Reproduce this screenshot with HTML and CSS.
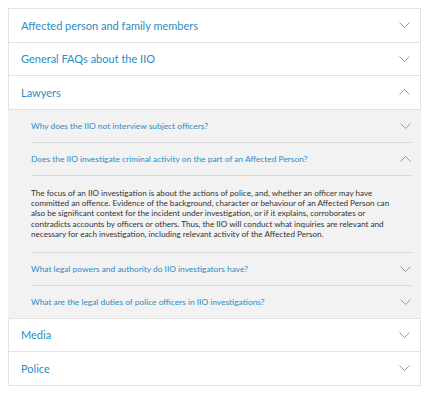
FILE: index.html
```html
<!DOCTYPE html>
<html lang="en">
  <head>
    <meta charset="utf-8" />
    <title>FAQ</title>
    <link rel="stylesheet" href="styles.css">
  </head>
  <body>
    <div class="accordion">
      <div class="section">
        <div class="section-head">
          <span>Affected person and family members</span>
          <svg class="chev" width="11" height="6" viewBox="0 0 11 6"><polyline points="0.5,0.5 5.5,5.5 10.5,0.5" /></svg>
        </div>
      </div>
      <div class="section">
        <div class="section-head">
          <span>General FAQs about the IIO</span>
          <svg class="chev" width="11" height="6" viewBox="0 0 11 6"><polyline points="0.5,0.5 5.5,5.5 10.5,0.5" /></svg>
        </div>
      </div>
      <div class="section open">
        <div class="section-head">
          <span>Lawyers</span>
          <svg class="chev" width="11" height="6" viewBox="0 0 11 6"><polyline points="0.5,5.5 5.5,0.5 10.5,5.5" /></svg>
        </div>
        <div class="section-body">
          <div class="question">
            <div class="question-head">
              <span>Why does the IIO not interview subject officers?</span>
              <svg class="chev" width="11" height="6" viewBox="0 0 11 6"><polyline points="0.5,0.5 5.5,5.5 10.5,0.5" /></svg>
            </div>
          </div>
          <div class="question">
            <div class="question-head">
              <span>Does the IIO investigate criminal activity on the part of an Affected Person?</span>
              <svg class="chev" width="11" height="6" viewBox="0 0 11 6"><polyline points="0.5,5.5 5.5,0.5 10.5,5.5" /></svg>
            </div>
            <p class="answer">The focus of an IIO investigation is about the actions of police, and, whether an officer may have committed an offence. Evidence of the background, character or behaviour of an Affected Person can also be significant context for the incident under investigation, or if it explains, corroborates or contradicts accounts by officers or others. Thus, the IIO will conduct what inquiries are relevant and necessary for each investigation, including relevant activity of the Affected Person.</p>
          </div>
          <div class="question">
            <div class="question-head">
              <span>What legal powers and authority do IIO investigators have?</span>
              <svg class="chev" width="11" height="6" viewBox="0 0 11 6"><polyline points="0.5,0.5 5.5,5.5 10.5,0.5" /></svg>
            </div>
          </div>
          <div class="question">
            <div class="question-head">
              <span>What are the legal duties of police officers in IIO investigations?</span>
              <svg class="chev" width="11" height="6" viewBox="0 0 11 6"><polyline points="0.5,0.5 5.5,5.5 10.5,0.5" /></svg>
            </div>
          </div>
        </div>
      </div>
      <div class="section">
        <div class="section-head">
          <span>Media</span>
          <svg class="chev" width="11" height="6" viewBox="0 0 11 6"><polyline points="0.5,0.5 5.5,5.5 10.5,0.5" /></svg>
        </div>
      </div>
      <div class="section">
        <div class="section-head">
          <span>Police</span>
          <svg class="chev" width="11" height="6" viewBox="0 0 11 6"><polyline points="0.5,0.5 5.5,5.5 10.5,0.5" /></svg>
        </div>
      </div>
    </div>
  </body>
</html>
```

FILE: styles.css
```css
html {
  font-family: Lato, "Noto Sans", sans-serif;
  font-size: 12px;
}

body {
  margin: 8px;
  background-color: white;
}

.accordion {
  width: 413px;
}

.section {
  border: 1px solid #e2e2e2;
  border-top: none;
  background-color: white;
}

.section:first-child {
  border-top: 1px solid #e2e2e2;
}

.section-head {
  display: flex;
  align-items: center;
  justify-content: space-between;
  height: 32.5px;
  padding: 0 10px 0 12px;
  color: #2b8cc4;
  font-size: 11px;
}

.chev polyline {
  fill: none;
  stroke: #9a9a9a;
  stroke-width: 1;
}

.section.open .section-head {
  border-bottom: 1px solid #e2e2e2;
}

.section-body {
  background-color: #f2f2f2;
  margin: 0 -1px;
  padding: 0 9px 0 23px;
}

.question {
  border-bottom: 1px solid #dadada;
}

.question:last-child {
  border-bottom: none;
}

.question-head {
  display: flex;
  align-items: center;
  justify-content: space-between;
  height: 32px;
  color: #2b8cc4;
  font-size: 8.4px;
}

.question-head .chev {
  margin-right: 1px;
}

.answer {
  margin: 0;
  padding: 12px 12px 12px 0;
  border-top: 1px solid #dadada;
  color: #333;
  font-size: 8.15px;
  line-height: 10.4px;
}
```
